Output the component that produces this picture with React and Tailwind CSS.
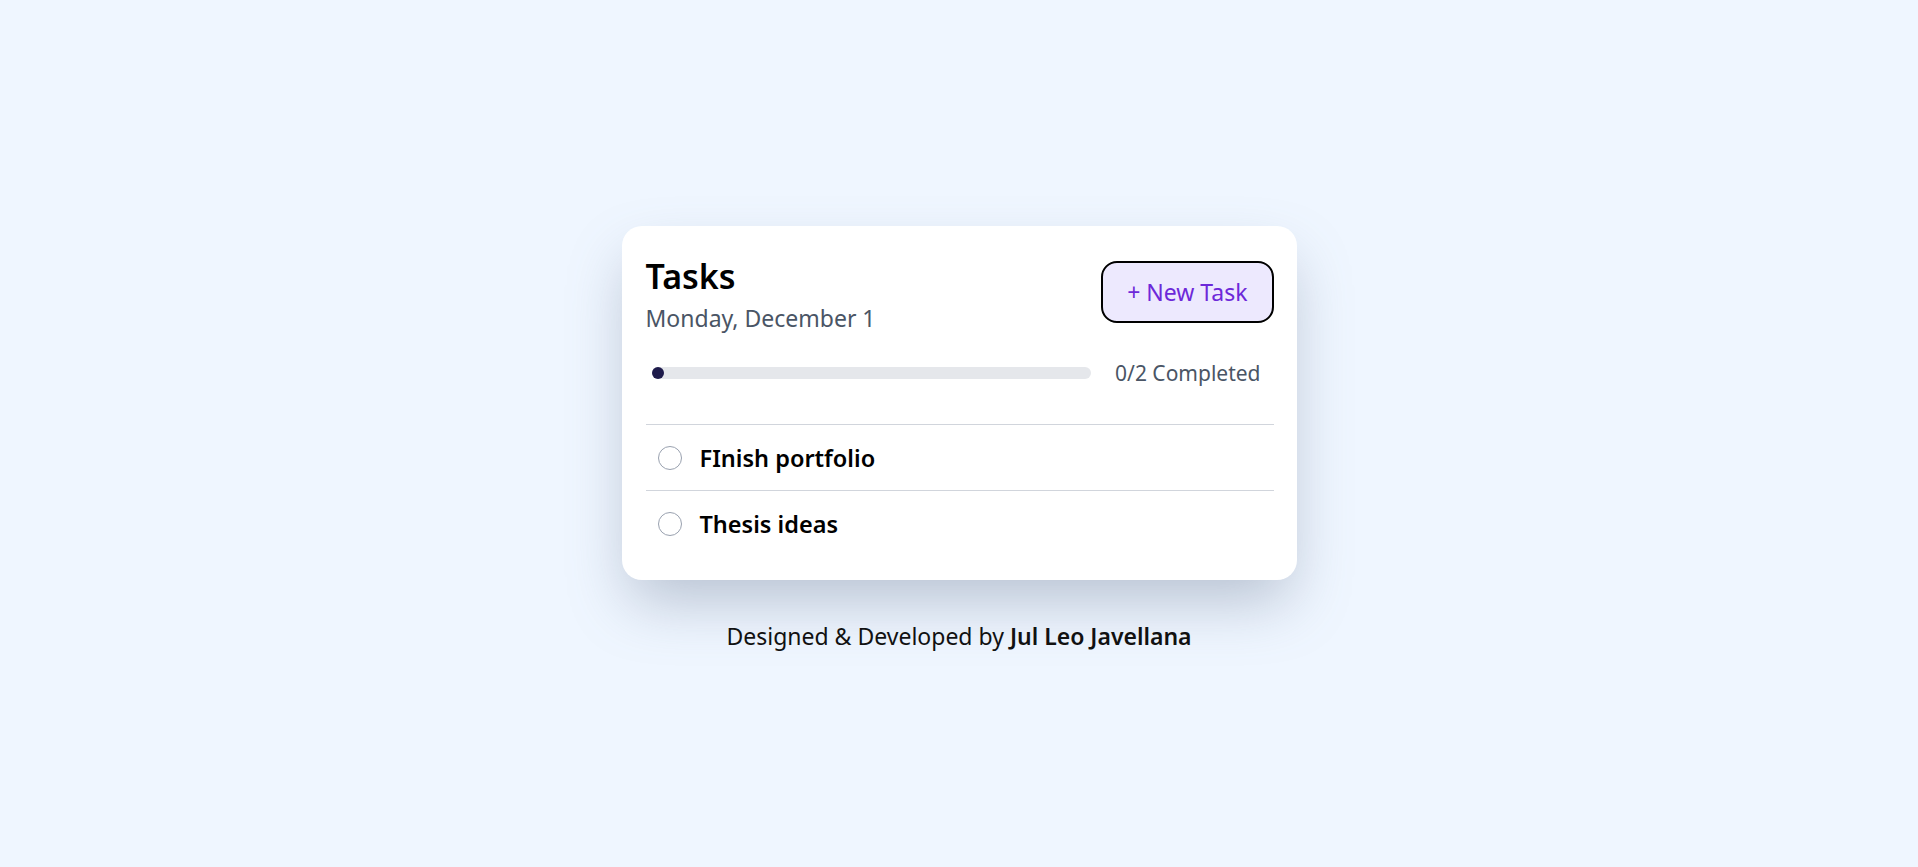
import React, { useState } from 'react';

const initialTasks = [
  { id: 1, title: 'FInish portfolio', done: false },
  { id: 2, title: 'Thesis ideas', done: false }
];

const App = () => {
  const [tasks, setTasks] = useState(initialTasks);
  const doneCount = tasks.filter(t => t.done).length;
  const pct = tasks.length ? (doneCount / tasks.length) * 100 : 0;

  const toggle = id => setTasks(tasks.map(t => (t.id === id ? { ...t, done: !t.done } : t)));

  return (
    <div className="min-h-screen pt-[11px] bg-[#eff6ff] flex flex-col items-center justify-center font-['Noto_Sans','Open_Sans',sans-serif]">
      <div className="w-[675px] bg-white rounded-[20px] shadow-[0_28px_60px_-8px_rgba(100,116,139,0.4)] pt-6 pb-6 pl-6 pr-[23px]">
        <div className="flex items-center justify-between">
          <div className="pt-[6px]">
            <h1 className="text-[34px] leading-10 font-semibold text-black">Tasks</h1>
            <p className="mt-[6px] text-[23px] leading-8 text-gray-600">Monday, December 1</p>
          </div>
          <button className="px-[24px] py-[13px] border-2 border-black rounded-2xl bg-[#ede9fe] text-[23px] leading-8 text-[#6d28d9]">
            + New Task
          </button>
        </div>

        <div className="mt-[25px] flex items-center gap-6 pl-[6px] pr-[13px]">
          <div className="flex-1 h-3 bg-gray-200 rounded-full">
            <div className="h-3 min-w-3 rounded-full bg-[#1e1b4b]" style={{ width: `${pct}%` }} />
          </div>
          <span className="text-[21px] leading-7 text-gray-600">{doneCount}/{tasks.length} Completed</span>
        </div>

        <div className="mt-[37px]">
          {tasks.map(task => (
            <div key={task.id} className="h-[66px] border-t border-gray-300 flex items-center gap-[18px] px-3">
              <button
                onClick={() => toggle(task.id)}
                className={`w-6 h-6 rounded-full border ${task.done ? 'bg-[#1e1b4b] border-[#1e1b4b]' : 'border-gray-400'}`}
              />
              <span className="text-[23.5px] leading-8 font-semibold text-black">{task.title}</span>
            </div>
          ))}
        </div>
      </div>

      <p className="mt-10 text-[23px] leading-8 text-[#111]">
        Designed &amp; Developed by <span className="font-semibold">Jul Leo Javellana</span>
      </p>
    </div>
  );
};

export default App;
